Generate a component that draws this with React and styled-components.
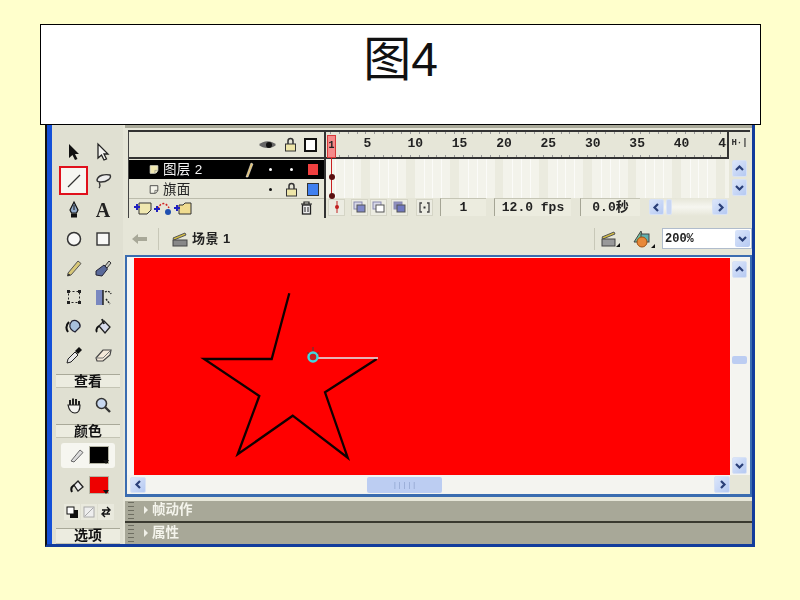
import React from "react";
import styled, { createGlobalStyle } from "styled-components";

const Global = createGlobalStyle`
  html, body { margin: 0; padding: 0; background: #ffffcc; }
  #root { width: 800px; height: 600px; overflow: hidden; }
`;

const CJK = `"Liberation Sans", "Noto Sans CJK SC", sans-serif`;
const MONO = `"Liberation Mono", "Noto Sans CJK SC", monospace`;

const Slide = styled.div`
  width: 800px; height: 600px; background: #ffffcc; padding-top: 24px; box-sizing: border-box;
  display: flex; flex-direction: column;
`;
const TitleBox = styled.h1`
  margin: 0 0 0 40px; width: 721px; height: 101px; box-sizing: border-box; flex: none;
  background: #fff; border: 1px solid #000; text-align: center;
  font: 400 48px/70px ${CJK}; color: #111;
`;
const Window = styled.div`
  margin-left: 45px; width: 710px; height: 422px; box-sizing: border-box; flex: none;
  display: flex; background: #e6e6d8; color: #111;
  border-left: 2px solid #111; border-right: 3px solid #123c9c; border-bottom: 3px solid #123c9c;
  filter: blur(0.5px); font-family: ${CJK};
`;
const BlueEdge = styled.div`width: 5px; background: #1450d8; flex: none;`;

/* toolbox */
const Toolbox = styled.aside`
  width: 71px; flex: none; box-sizing: border-box; padding: 12px 0 0 4px;
  display: flex; flex-direction: column; background: #e0e0d2;
`;
const ToolGrid = styled.div`display: grid; grid-template-columns: 29px 29px; grid-auto-rows: 29px; margin-left: 3px;`;
const ToolBtn = styled.div`
  display: flex; align-items: center; justify-content: center; box-sizing: border-box;
  ${p => p.$active && `background: #f6f6f2; border: 2px solid #e0101c;`}
`;
const Section = styled.div`
  height: ${p => p.$h || 14}px; margin-top: ${p => p.$mt}px; width: 64px; box-sizing: border-box; text-align: center;
  font: 700 14px/13px ${CJK}; color: #111; background: #ecece0;
  border-top: 1px solid #a9a999; border-bottom: 1px solid #c4c4b4;
`;
const StrokeRow = styled.div`
  margin: ${p => p.$mt}px 0 0 5px; width: 54px; height: 25px; box-sizing: border-box; padding-left: 8px; gap: 5px;
  display: flex; align-items: center; border-radius: 3px; background: ${p => p.$hl ? "#f6f6f0" : "transparent"};
`;
const Swatch = styled.div`
  width: 18px; height: 16px; background: ${p => p.$c}; position: relative; outline: 1px solid #b4b4a4;
  &::after {
    content: ""; position: absolute; right: -1px; bottom: -1px; border-left: 3px solid transparent; border-right: 3px solid transparent;
    border-top: 4px solid #111;
  }
`;
const SwapRow = styled.div`margin: 7px 0 0 8px; display: flex; gap: 1px;`;
const SwapBtn = styled.div`width: 16px; height: 16px; background: #e9e9dd; display: flex; align-items: center; justify-content: center;`;

/* main */
const Main = styled.main`
  flex: 1; min-width: 0; display: flex; flex-direction: column; margin-left: 2px;
  border-top: 3px solid #a8a898; box-sizing: border-box;
`;
const Timeline = styled.section`
  margin: 2px 0 0 3px; width: 622px; height: 88px; flex: none; display: flex; box-sizing: border-box;
  border-top: 2px solid #333; background: #e6e6d8;
`;
const LayerPane = styled.div`
  width: 198px; flex: none; box-sizing: border-box; border-left: 1px solid #444; border-right: 2px solid #333;
  display: flex; flex-direction: column;
`;
const LayerHead = styled.div`
  height: 25px; border-bottom: 2px solid #333; flex: none; display: flex; align-items: center; justify-content: flex-end;
  gap: 7px; padding-right: 7px;
`;
const OutlineBox = styled.span`width: 9px; height: 10px; border: 2px solid #111; background: #fff;`;
const LayerRow = styled.div`
  height: 19px; margin-top: ${p => p.$mt || 0}px; flex: none; display: flex; align-items: center; box-sizing: border-box; position: relative;
  background: ${p => p.$sel ? "#000" : "#e6e6d8"}; color: ${p => p.$sel ? "#f4f4f4" : "#222"};
  padding-left: ${p => p.$pl}px; border-bottom: ${p => p.$sel ? "0" : "1px solid #bcbcac"};
  font: 400 13.5px/19px ${CJK};
`;
const LayerName = styled.span`margin-left: 4px; width: ${p => p.$w}px; flex: none; letter-spacing: .3px; white-space: nowrap;`;
const LayerCell = styled.span`width: 21.5px; flex: none; display: flex; justify-content: center; align-items: center;`;
const Dot = styled.span`width: 3px; height: 3px; border-radius: 50%; background: ${p => p.$c};`;
const ColorBox = styled.span`width: 10px; height: 11px; background: ${p => p.$c}; outline: 1px solid ${p => p.$o};`;
const LayerFoot = styled.div`display: flex; align-items: center; height: 18px; padding-left: 5px; gap: 2px;`;
const Trash = styled.span`margin-left: auto; margin-right: 11px; display: flex;`;

const FramePane = styled.div`flex: 1; min-width: 0; position: relative; display: flex; flex-direction: column;`;
const RulerRow = styled.div`height: 27px; flex: none; display: flex;`;
const Ruler = styled.div`
  width: 403px; flex: none; overflow: hidden; display: flex; box-sizing: border-box;
  font: 700 13px/24px ${MONO}; color: #222; border-right: 2px solid #333; border-bottom: 2px solid #333;
  background:
    repeating-linear-gradient(90deg, #999 0 1px, transparent 1px 8.87px) 4px 0 / 100% 2px no-repeat,
    repeating-linear-gradient(90deg, #999 0 1px, transparent 1px 8.87px) 4px 100% / 100% 2px no-repeat;
`;
const RulerNum = styled.span`flex: none; width: ${p => p.$w}px; text-align: center; white-space: nowrap;`;
const HBtn = styled.div`flex: 1; font: 700 9px/22px ${MONO}; text-align: center; color: #333;`;
const FramesRow = styled.div`height: 39px; flex: none; display: flex;`;
const Frames = styled.div`
  width: 403px; flex: none; margin-top: 0;
  background: repeating-linear-gradient(90deg, #f3f3eb 0 8.87px, #fbfbf8 8.87px 9.87px, #f3f3eb 9.87px 17.7px, #fbfbf8 17.7px 18.7px, #f3f3eb 18.7px 26.6px, #fbfbf8 26.6px 27.6px, #f3f3eb 27.6px 35.5px, #ebebdf 35.5px 44.35px);
`;
const VBar = styled.div`flex: 1; display: flex; flex-direction: column; align-items: center; gap: 2px; padding-top: 1px;`;
const ScrollBtn = styled.div`
  width: ${p => p.$w || 15}px; height: ${p => p.$h || 17}px; flex: none; box-sizing: border-box; border-radius: 2px;
  background: linear-gradient(135deg, #dce6fa, #b5c9f2); border: 1px solid #d8e2f4;
  display: flex; align-items: center; justify-content: center; color: #2a3f78;
`;
const FrameFoot = styled.div`height: 18px; display: flex; align-items: center; padding-left: 2px; position: relative; top: 0;`;
const FootBtn = styled.div`
  width: 17px; height: 17px; margin-left: ${p => p.$ml || 0}px; flex: none; background: #ecece2;
  border: 1px solid #d5d5c6; box-sizing: border-box; display: flex; align-items: center; justify-content: center;
`;
const Field = styled.div`
  margin-left: ${p => p.$ml}px; width: ${p => p.$w}px; height: 18px; flex: none; box-sizing: border-box;
  border-left: 1px solid #a5a595; border-top: 1px solid #c5c5b5; background: #ececdf;
  font: 700 13px/18px ${MONO}; text-align: center; color: #222; white-space: nowrap;
`;
const MiniScroll = styled.div`
  margin-left: 9px; width: 79px; height: 18px; flex: none; display: flex; align-items: center; background: linear-gradient(#e6e6d8, #f6f6f0, #e6e6d8);
`;
const MiniThumb = styled.div`width: 6px; height: 16px; margin-left: 2px; background: #c8d6f4; border: 1px solid #dbe4f5; box-sizing: border-box; border-radius: 2px;`;
const Playhead = styled.div`
  position: absolute; left: 1px; top: 2px; width: 8px; height: 62px; pointer-events: none;
`;
const PlayTop = styled.div`
  width: 9px; height: 23px; background: #f58a8a; border: 1px solid #d83838; box-sizing: border-box; margin-top: 1px;
  font: 700 10px/20px ${MONO}; text-align: center; color: #222;
`;
const PlayLine = styled.div`width: 1px; height: 40px; background: #c82020; margin-left: 4px;`;
const KeyDot = styled.div`
  position: absolute; left: 2px; top: ${p => p.$t}px; width: 6px; height: 6px; border-radius: 50%; background: #5a1010;
`;

const Crumb = styled.nav`
  height: 33px; margin-top: 4px; flex: none; display: flex; align-items: center; padding-left: 6px;
  font: 700 13px/1 ${CJK}; color: #222;
`;
const Divider = styled.span`width: 1px; height: 22px; background: #c8c8b8; flex: none; margin: ${p => p.$m};`;
const CrumbName = styled.span`margin-left: 3px; letter-spacing: .5px;`;
const Spacer = styled.span`flex: 1;`;
const Gap = styled.span`width: ${p => p.$w}px; flex: none;`;
const ZoomSelect = styled.div`
  width: 90px; height: 21px; margin-left: 7px; flex: none; background: #fff; border: 1px solid #b0bccc; box-sizing: border-box;
  display: flex; align-items: center; padding-left: 2px; font: 700 12px/1 ${MONO};
`;
const ZoomArrow = styled.span`
  margin-left: auto; margin-right: 1px; width: 15px; height: 17px; display: flex; align-items: center; justify-content: center;
  background: linear-gradient(135deg, #dce6fa, #b5c9f2); border-radius: 2px;
`;

const StageFrame = styled.section`
  height: 242px; flex: none; box-sizing: border-box; border: 2px solid #3a6cb0; border-bottom-width: 3px; background: #f6f6f4;
  display: grid; grid-template-columns: 1fr 20px; grid-template-rows: 217px 1fr; padding: 1px 0 0 0;
`;
const Canvas = styled.div`margin-left: 7px; background: #ff0000; position: relative; overflow: hidden;`;
const VScroll = styled.div`display: flex; flex-direction: column; align-items: center; padding: 3px 2px 1px 0; background: #f4f4f0; margin-left: 1px; box-sizing: border-box;`;
const VThumb = styled.div`width: 15px; height: 8px; margin-top: 78px; margin-bottom: auto; background: #bccdf2; border-radius: 2px;`;
const HScroll = styled.div`display: flex; align-items: center; padding: 0 0 0 3px; background: #f4f4f0;`;
const HThumb = styled.div`
  width: 75px; height: 16px; margin-left: 221px; margin-right: auto; flex: none; box-sizing: border-box; border-radius: 2px;
  background: #bccdf2; display: flex; align-items: center; justify-content: center; font: 400 8px/1 ${MONO}; color: #8ea2cc;
`;
const Corner = styled.div`background: #e6e6d8;`;

const PanelBar = styled.div`
  height: ${p => p.$h}px; margin-top: ${p => p.$mt}px; flex: none; background: #a8a898; box-sizing: border-box; display: flex; align-items: center; padding: 0 0 2px 3px;
  border-bottom: ${p => p.$line ? "2px solid #3a3a30" : "0"}; color: #f4f4ec; font: 700 13.5px/1 ${CJK};
`;
const Grip = styled.span`
  width: 6px; height: 18px; flex: none;
  background: repeating-linear-gradient(0deg, #55554a 0 1px, transparent 1px 4px);
  opacity: .7;
`;
const Arrow = styled.span`
  margin: 0 4px 0 10px; width: 0; height: 0; border-left: 4px solid #f0f0e8; border-top: 4px solid transparent; border-bottom: 4px solid transparent;
`;

const I = ({ children, w = 20, h = 20, vb }) => (
  <svg width={w} height={h} viewBox={vb || `0 0 ${w} ${h}`} fill="none">{children}</svg>
);
const Chevron = ({ d }) => {
  const paths = { up: "M3 8 L6.5 4.5 L10 8", down: "M3 5 L6.5 8.5 L10 5", left: "M8 3 L4.5 6.5 L8 10", right: "M5 3 L8.5 6.5 L5 10" };
  return <svg width="13" height="13" viewBox="0 0 13 13"><path d={paths[d]} fill="none" stroke="#2a3f78" strokeWidth="2.2" /></svg>;
};

const tools = {
  arrow: <path d="M5 2 L5 16 L8.5 13 L11 18 L13.5 17 L11 12 L15 12 Z" fill="#111" />,
  sub: <path d="M5 2 L5 16 L8.5 13 L11 18 L13.5 17 L11 12 L15 12 Z" fill="#f4f4f0" stroke="#222" strokeWidth="1.3" />,
  line: <path d="M4 16 L16 4" stroke="#333" strokeWidth="1.3" />,
  lasso: <g stroke="#333" strokeWidth="1.4" fill="#eee"><path d="M4 9 C5 4 12 3 17 4 C19 7 14 11 8 11 C5 11 4 10 4 9 Z" /><path d="M7 11 C5 13 9 14 6 17" /></g>,
  pen: <g><path d="M10 2 L14 10 L12.5 13 L7.5 13 L6 10 Z" fill="#8fa8c8" stroke="#111" strokeWidth="1.2" /><rect x="7" y="13.5" width="6" height="4" fill="#111" /><path d="M10 5 V10" stroke="#111" /></g>,
  text: <text x="10" y="17" textAnchor="middle" fontFamily="'Liberation Serif', serif" fontWeight="700" fontSize="20" fill="#222">A</text>,
  oval: <circle cx="10" cy="10" r="6.5" fill="#f8f8f6" stroke="#333" strokeWidth="1.5" />,
  rect: <rect x="4" y="4" width="12" height="12" fill="#f8f8f6" stroke="#333" strokeWidth="1.4" />,
  pencil: <g><path d="M4 15 L14 3 L17 5.5 L7 17 L3.5 18 Z" fill="#d8c878" stroke="#555" strokeWidth="1" /><path d="M3.5 18 L4.5 15.5 L6.5 17 Z" fill="#222" /></g>,
  brush: <g><path d="M12 8 L16 3 L18 5 L14 10 Z" fill="#c8c8c0" stroke="#333" /><path d="M3 13 L11 7 L14.5 11 L9 18 L3 17 Z" fill="#5a6a9a" stroke="#223" /></g>,
  free: <g stroke="#222"><rect x="4.5" y="4.5" width="11" height="11" strokeDasharray="2 2" /><g fill="#222"><rect x="3.5" y="3.5" width="2" height="2" /><rect x="14.5" y="3.5" width="2" height="2" /><rect x="3.5" y="14.5" width="2" height="2" /><rect x="14.5" y="14.5" width="2" height="2" /></g></g>,
  fillT: <g><rect x="3" y="3" width="7" height="15" fill="#7a88c0" /><path d="M10 3 V18" stroke="#222" strokeWidth="1.5" /><path d="M12 5 a4 4 0 0 1 6 2 M13 12 L17 17" stroke="#222" strokeWidth="1.4" strokeDasharray="2 1" /></g>,
  ink: <g><path d="M8 5 C12 3 17 7 16 11 L11 16 C8 15 5 12 6 8 Z" fill="#a8c0dc" stroke="#223" strokeWidth="1.2" /><path d="M5 6 C2 9 2 13 4 16" stroke="#111" strokeWidth="2" /></g>,
  bucket: <g><path d="M6 10 L11 5 L17 11 L12 17 Z" fill="#d8dcec" stroke="#222" strokeWidth="1.3" /><path d="M9 3 L11 8" stroke="#222" strokeWidth="2" /><path d="M6 10 C3 12 3 15 4 16" stroke="#111" strokeWidth="2" /></g>,
  dropper: <g><path d="M3 18 L4 14 L11 7 L14 10 L7 17 Z" fill="#e8e8e8" stroke="#222" /><path d="M11 6 L15 2 L18 5 L14 9 Z" fill="#111" /></g>,
  eraser: <g><path d="M3 13 L10 5 L18 5 L17 10 L10 16 L4 16 Z" fill="#f4e8d8" stroke="#444" strokeWidth="1.2" /><path d="M3 13 L10 13 L17 6" stroke="#777" /></g>,
  hand: <g stroke="#222" strokeWidth="1.2" fill="#f4f4f0"><path d="M6 11 V5 M9 10 V3.5 M12 10 V4 M15 11 V6" strokeWidth="2" /><path d="M4 10 C5 15 7 18 11 18 C14 18 16 15 16 10 Z" /></g>,
  zoom: <g><circle cx="8.5" cy="8.5" r="5" fill="#c8d8f0" stroke="#333" strokeWidth="1.6" /><path d="M12 12 L17 17" stroke="#333" strokeWidth="2.4" /></g>,
};
const toolOrder = ["arrow", "sub", "line", "lasso", "pen", "text", "oval", "rect", "pencil", "brush", "free", "fillT", "ink", "bucket", "dropper", "eraser"];

const Doc = ({ light }) => (
  <I w={17} h={17}><path d="M2 2 H15 V10 Q13 15 10 15 H2 Z" fill={light ? "#f0e8b0" : "#f4f4ea"} stroke={light ? "#e8e8d8" : "#333"} strokeWidth="1.4" /><path d="M15 10 H10 V15" stroke={light ? "#888" : "#333"} /></I>
);
const Lock = () => (
  <I w={13} h={15}><path d="M4 7 V4 a2.5 2.5 0 0 1 5 0 V7" stroke="#333" strokeWidth="1.5" /><rect x="1.5" y="7" width="10" height="7" fill="#eee6a8" stroke="#333" /></I>
);
const Clapper = () => (
  <I w={18} h={16}><path d="M2 7 L14 2 L15 4 L3 9 Z" fill="#d8c040" stroke="#555" /><rect x="2" y="9" width="14" height="6" fill="#888" stroke="#444" /></I>
);

const rulerCells = [["", 9], ["", 7], ["5", 51], ["10", 44.4], ["15", 44.4], ["20", 44.4], ["25", 44.4], ["30", 44.4], ["35", 44.4], ["40", 44.4], ["45", 44.4]];

export default function App() {
  return (
    <Slide>
      <Global />
      <TitleBox>图4</TitleBox>
      <Window>
        <BlueEdge />
        <Toolbox>
          <ToolGrid>
            {toolOrder.map(t => (
              <ToolBtn key={t} $active={t === "line"}><I>{tools[t]}</I></ToolBtn>
            ))}
          </ToolGrid>
          <Section $mt={5}>查看</Section>
          <ToolGrid style={{ marginTop: 2 }}>
            <ToolBtn><I>{tools.hand}</I></ToolBtn>
            <ToolBtn><I>{tools.zoom}</I></ToolBtn>
          </ToolGrid>
          <Section $mt={5}>颜色</Section>
          <StrokeRow $mt={5} $hl>
            <I w={16} h={16}><path d="M2 14 L11 3 L14 5.5 L5 15 Z" fill="#ddd" stroke="#666" /></I>
            <Swatch $c="#000" />
          </StrokeRow>
          <StrokeRow $mt={5}>
            <I w={16} h={16}><path d="M5 8 L9 4 L14 10 L9 14 Z" fill="#eee" stroke="#222" strokeWidth="1.3" /><path d="M5 8 C2 10 2 13 3 15" stroke="#111" strokeWidth="2" /></I>
            <Swatch $c="#ee0000" />
          </StrokeRow>
          <SwapRow>
            <SwapBtn><I w={13} h={13}><rect x="4" y="4" width="8" height="8" fill="#111" /><rect x="1" y="1" width="7" height="7" fill="#fff" stroke="#111" /></I></SwapBtn>
            <SwapBtn><I w={12} h={12}><rect x="1" y="1" width="10" height="10" fill="#eee" stroke="#aaa" /><path d="M2 10 L10 2" stroke="#aaa" /></I></SwapBtn>
            <SwapBtn><I w={12} h={12}><path d="M2 4 H9 M7 1 L10 4 L7 7 M10 8 H3 M5 5 L2 8 L5 11" stroke="#111" strokeWidth="1.4" /></I></SwapBtn>
          </SwapRow>
          <Section $mt={8} $h={16}>选项</Section>
        </Toolbox>

        <Main>
          <Timeline>
            <LayerPane>
              <LayerHead>
                <I w={19} h={12}><path d="M1 6 C5 1 14 1 18 6 C14 10 5 10 1 6 Z" fill="#666" /><circle cx="11" cy="6" r="3" fill="#111" /></I>
                <Lock />
                <OutlineBox />
              </LayerHead>
              <LayerRow $sel $pl={20} $mt={1}>
                <Doc light />
                <LayerName $w={75}>图层 2</LayerName>
                <LayerCell><I w={10} h={17}><path d="M2 16 L7 2 L9 3 L4 16 Z" fill="#e0c070" stroke="#f4f4f4" strokeWidth=".5" /></I></LayerCell>
                <LayerCell><Dot $c="#fff" /></LayerCell>
                <LayerCell><Dot $c="#fff" /></LayerCell>
                <LayerCell><ColorBox $c="#f04040" $o="#000" /></LayerCell>
              </LayerRow>
              <LayerRow $pl={20} $mt={1}>
                <Doc />
                <LayerName $w={96.5}>旗面</LayerName>
                <LayerCell><Dot $c="#111" /></LayerCell>
                <LayerCell><Lock /></LayerCell>
                <LayerCell><ColorBox $c="#4080f0" $o="#333" /></LayerCell>
              </LayerRow>
              <LayerFoot>
                <I w={18} h={16}><path d="M5 3 H17 V10 L13 14 H5 Z" fill="#f0e8b0" stroke="#333" /><path d="M0 7 H6 M3 4 V10" stroke="#2020c0" strokeWidth="2" /></I>
                <I w={18} h={16}><path d="M4 9 C6 2 12 2 15 8" stroke="#d02020" strokeWidth="1.5" strokeDasharray="2 1.5" /><circle cx="14" cy="12" r="3" fill="#2050b0" /><path d="M0 9 H6 M3 6 V12" stroke="#2020c0" strokeWidth="2" /></I>
                <I w={18} h={16}><path d="M5 5 H9 L11 3 H17 V14 H5 Z" fill="#f0dc90" stroke="#333" /><path d="M0 8 H6 M3 5 V11" stroke="#2020c0" strokeWidth="2" /></I>
                <Trash><I w={13} h={15}><path d="M1 3 H12 M4 3 V1 H9 V3" stroke="#222" strokeWidth="1.2" /><rect x="2.5" y="4" width="8" height="9" fill="#eee" stroke="#222" strokeWidth="1.3" /><path d="M5 6 V11 M8 6 V11" stroke="#222" /></I></Trash>
              </LayerFoot>
            </LayerPane>
            <FramePane>
              <RulerRow>
                <Ruler>
                  {rulerCells.map(([n, w], i) => <RulerNum key={i} $w={w}>{n}</RulerNum>)}
                </Ruler>
                <HBtn>H·|</HBtn>
              </RulerRow>
              <FramesRow>
                <Frames />
                <VBar>
                  <ScrollBtn $h={17}><Chevron d="up" /></ScrollBtn>
                  <ScrollBtn $h={17}><Chevron d="down" /></ScrollBtn>
                </VBar>
              </FramesRow>
              <FrameFoot>
                <FootBtn><I w={6} h={12}><path d="M3 0 V12" stroke="#c02020" /><circle cx="3" cy="6" r="2" fill="#c02020" /></I></FootBtn>
                <FootBtn $ml={6}><I w={13} h={12}><rect x="1" y="1" width="8" height="7" fill="#d8d8e8" stroke="#8888b0" /><rect x="4" y="4" width="8" height="7" fill="#8088c8" stroke="#555" /></I></FootBtn>
                <FootBtn $ml={2}><I w={13} h={12}><rect x="1" y="1" width="8" height="7" fill="#d8d8e8" stroke="#8888b0" /><rect x="4" y="4" width="8" height="7" fill="#fff" stroke="#555" /></I></FootBtn>
                <FootBtn $ml={4}><I w={13} h={12}><rect x="1" y="1" width="8" height="7" fill="#9090c0" stroke="#8888b0" /><rect x="4" y="4" width="8" height="7" fill="#7078c0" stroke="#555" /></I></FootBtn>
                <FootBtn $ml={8}><I w={11} h={11}><path d="M3 1 H1 V10 H3 M8 1 H10 V10 H8" stroke="#444" strokeWidth="1.3" /><rect x="4.5" y="4.5" width="2" height="2" fill="#333" /></I></FootBtn>
                <Field $ml={7} $w={46}>1</Field>
                <Field $ml={8} $w={77}>12.0 fps</Field>
                <Field $ml={9} $w={60}>0.0秒</Field>
                <MiniScroll>
                  <ScrollBtn $w={15} $h={16}><Chevron d="left" /></ScrollBtn>
                  <MiniThumb />
                  <Spacer />
                  <ScrollBtn $w={16} $h={16}><Chevron d="right" /></ScrollBtn>
                </MiniScroll>
              </FrameFoot>
              <Playhead>
                <PlayTop>1</PlayTop>
                <PlayLine />
                <KeyDot $t={40} />
                <KeyDot $t={59} />
              </Playhead>
            </FramePane>
          </Timeline>

          <Crumb>
            <I w={17} h={12}><path d="M1 6 L7 1 V4 H16 V8 H7 V11 Z" fill="#a8a898" /></I>
            <Divider $m="0 12px 0 10px" />
            <Clapper />
            <CrumbName>场景 1</CrumbName>
            <Spacer />
            <Divider $m="0 5px 0 0" />
            <I w={20} h={18}><path d="M2 7 L14 2 L15 4 L3 9 Z" fill="#d8c040" stroke="#555" /><rect x="2" y="9" width="13" height="7" fill="#999" stroke="#444" /><path d="M16 17 L20 17 L20 13 Z" fill="#111" /></I>
            <Gap $w={12} />
            <I w={23} h={20}><path d="M9 2 L2 13 H12 Z" fill="#70c0a0" stroke="#444" /><rect x="9" y="5" width="8" height="8" fill="#60b0b0" stroke="#444" /><circle cx="10" cy="13" r="5" fill="#e88838" stroke="#a05010" /><path d="M19 19 L23 19 L23 15 Z" fill="#111" /></I>
            <ZoomSelect>200%<ZoomArrow><Chevron d="down" /></ZoomArrow></ZoomSelect>
          </Crumb>

          <StageFrame>
            <Canvas>
              <svg width="597" height="217" viewBox="134 258 597 217">
                <polyline
                  points="289.3,293.3 271.7,359 204,359 259.3,396 237.7,454.3 292.7,415.7 347.7,457.7 325,392.3 376.7,359"
                  fill="none" stroke="#100000" strokeWidth="2.3"
                />
                <path d="M316 358 H378" stroke="#dfeef2" strokeWidth="1.5" />
                <circle cx="313" cy="357" r="4.5" fill="#c82020" stroke="#40d8e0" strokeWidth="2.4" />
                <path d="M313 347 V351 M307 353 H309 M317 353 H319" stroke="#444" strokeWidth="1" />
              </svg>
            </Canvas>
            <VScroll>
              <ScrollBtn $h={17}><Chevron d="up" /></ScrollBtn>
              <VThumb />
              <ScrollBtn $h={17}><Chevron d="down" /></ScrollBtn>
            </VScroll>
            <HScroll>
              <ScrollBtn $w={16} $h={16}><Chevron d="left" /></ScrollBtn>
              <HThumb>|||||</HThumb>
              <ScrollBtn $w={16} $h={17}><Chevron d="right" /></ScrollBtn>
            </HScroll>
            <Corner />
          </StageFrame>
          <PanelBar $h={22} $mt={4} $line><Grip /><Arrow />帧动作</PanelBar>
          <PanelBar $h={21} $mt={0}><Grip /><Arrow />属性</PanelBar>
        </Main>
      </Window>
    </Slide>
  );
}
